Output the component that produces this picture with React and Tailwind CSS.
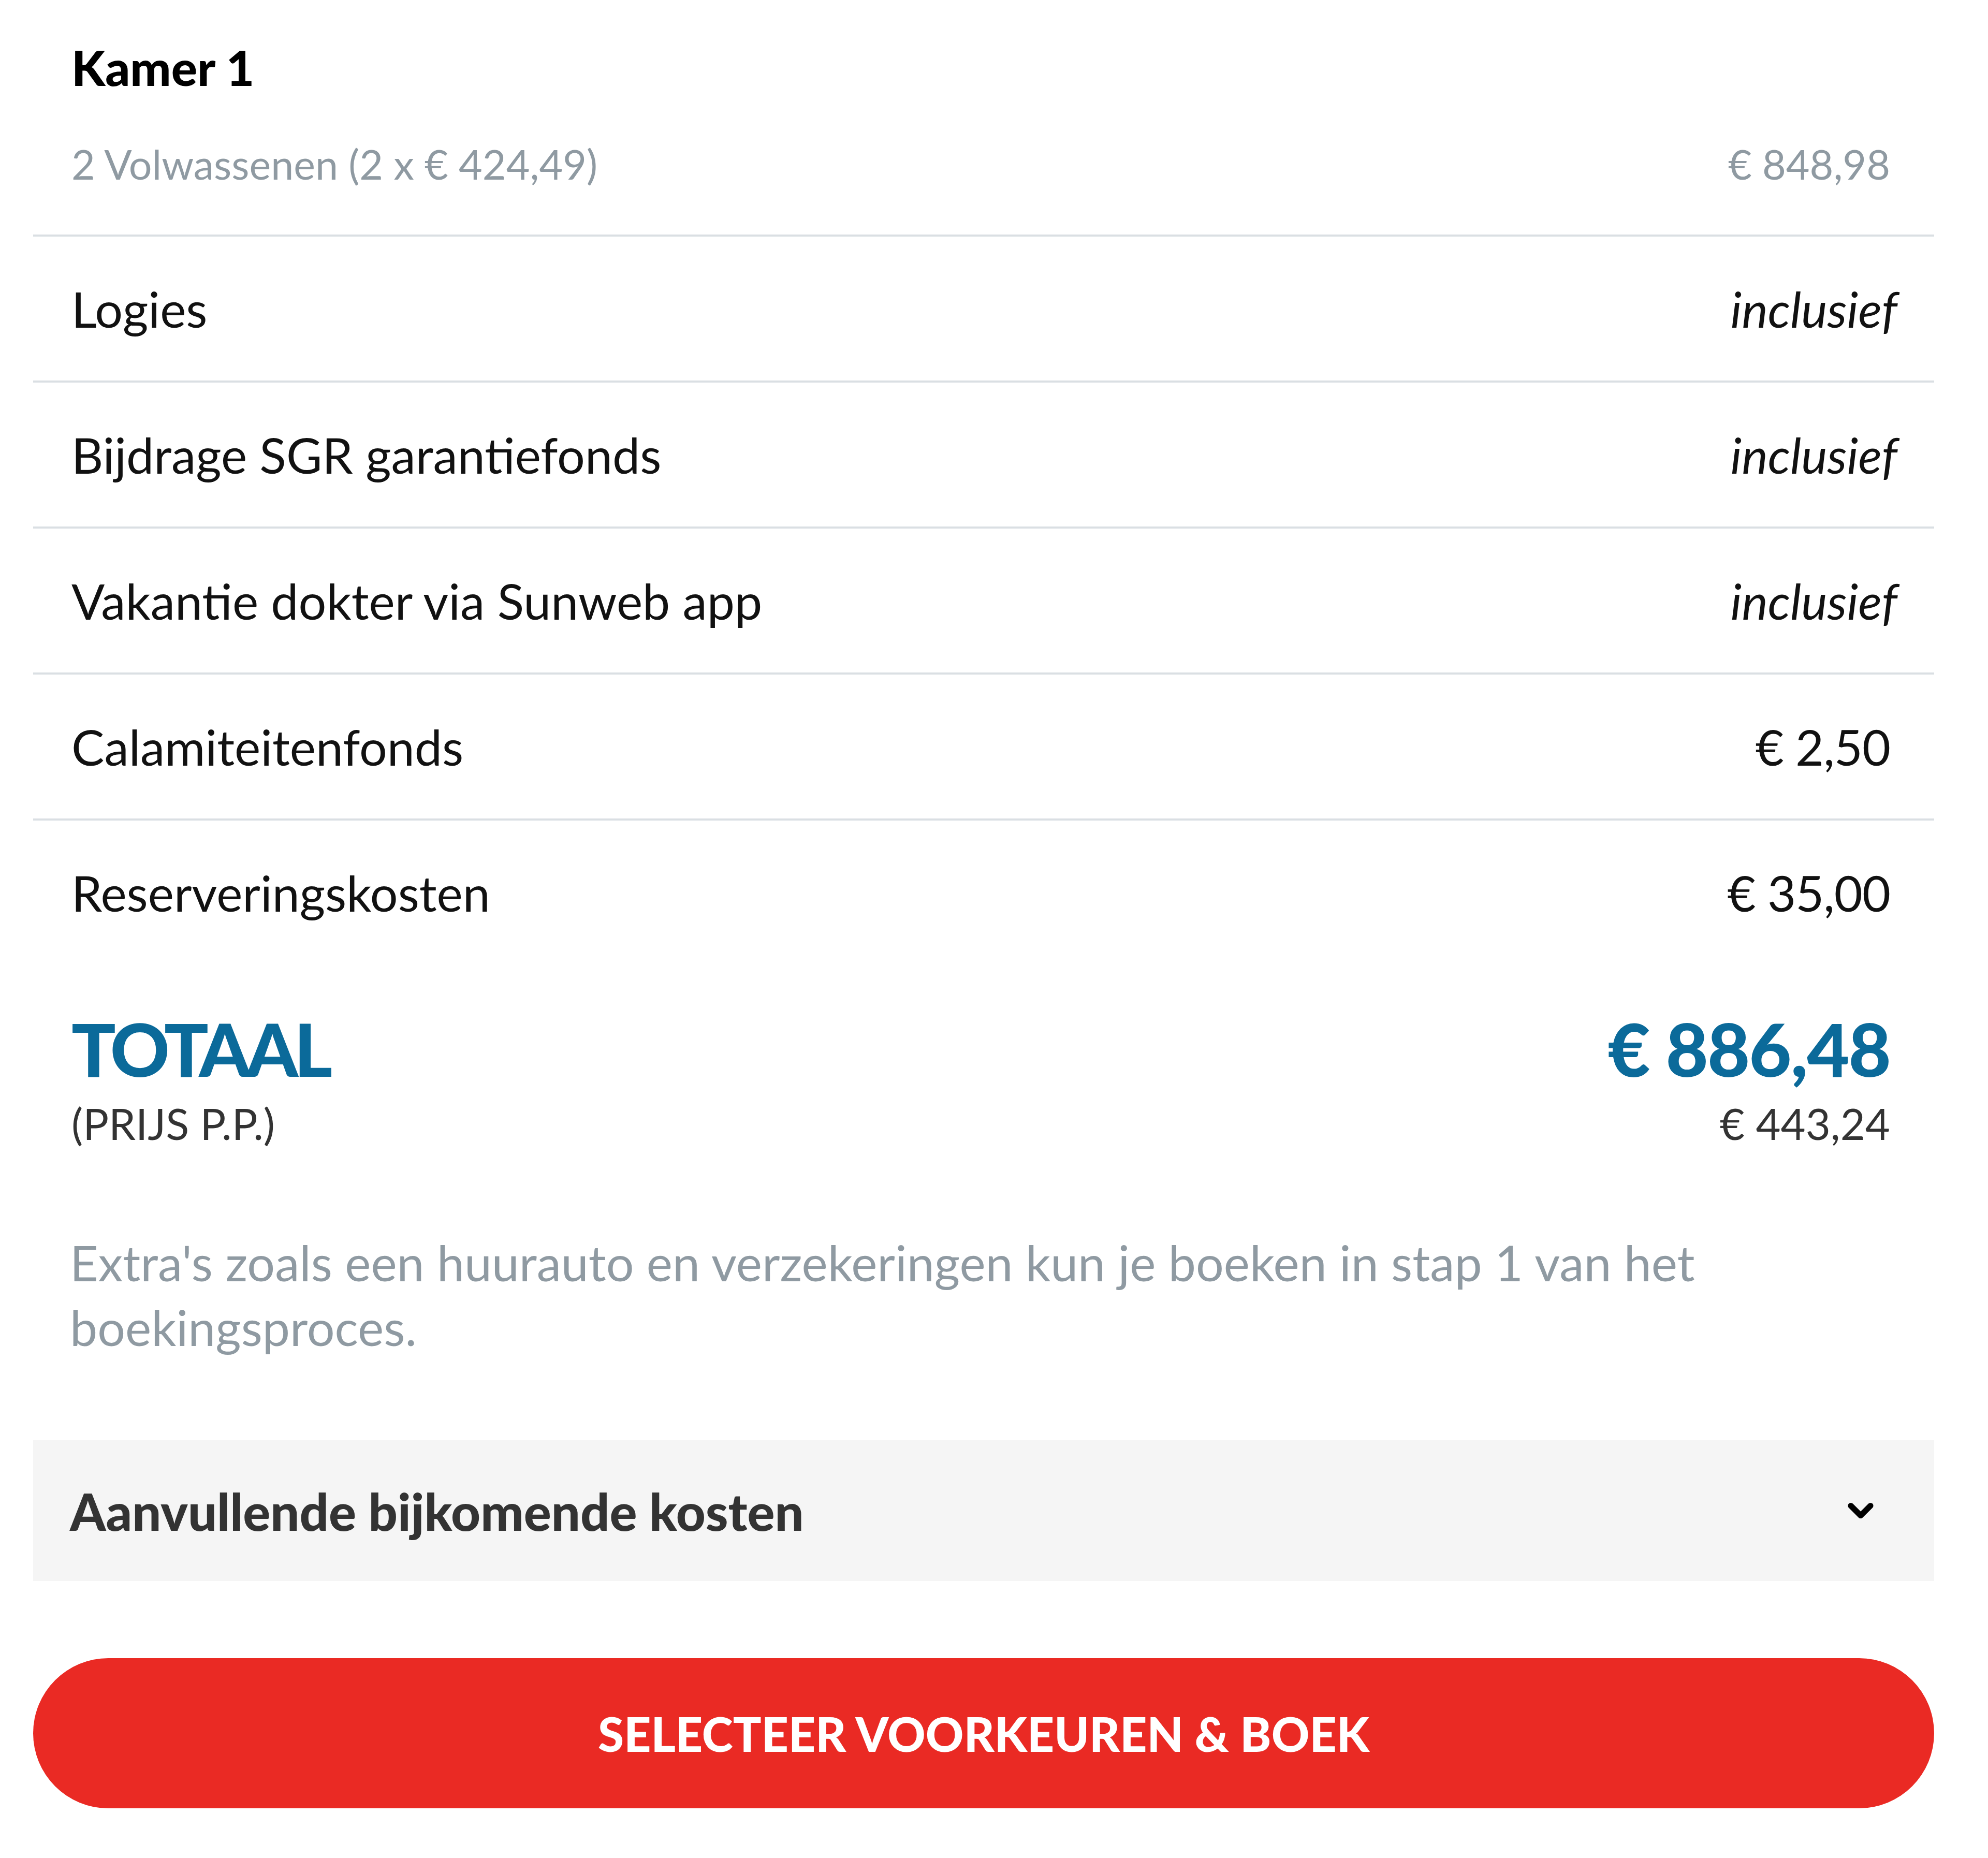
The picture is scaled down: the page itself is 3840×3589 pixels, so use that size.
import { ChevronDown } from 'lucide-react'

const rows = [
  { label: 'Logies', value: 'inclusief', italic: true },
  { label: 'Bijdrage SGR garantiefonds', value: 'inclusief', italic: true },
  { label: 'Vakantie dokter via Sunweb app', value: 'inclusief', italic: true },
  { label: 'Calamiteitenfonds', value: '€ 2,50' },
  { label: 'Reserveringskosten', value: '€ 35,00' },
]

const PriceRow = ({ label, value, italic }) => (
  <div className="flex h-[282px] items-center justify-between border-t-[4px] border-[#dadfe3] pl-[74px] pr-[85px]">
    <span className="text-[95px] leading-none text-[#111]">{label}</span>
    <span className={`text-[95px] leading-none text-[#111] ${italic ? 'italic -mr-[14px]' : 'tracking-[-1px]'}`}>{value}</span>
  </div>
)

const App = () => {
  return (
    <div className="min-h-screen w-full bg-white pl-[64px] pr-[104px] font-['Lato',sans-serif]">
      {/* Kamer */}
      <div className="pl-[74px] pr-[85px]">
        <div className="flex h-[260px] items-center">
          <h2 className="text-[94px] font-black leading-none text-black">Kamer 1</h2>
        </div>
        <div className="flex h-[112px] items-center justify-between text-[79px] leading-none text-[#8f9aa2]">
          <span>2 Volwassenen (2 x € 424,49)</span>
          <span>€ 848,98</span>
        </div>
        <div className="h-[81px]" />
      </div>

      {/* Rows */}
      {rows.map((row) => (
        <PriceRow key={row.label} {...row} />
      ))}

      {/* Totaal */}
      <div className="pl-[74px] pr-[85px] pt-[87px]">
        <div className="flex h-[150px] items-center justify-between text-[142px] font-black leading-none text-[#0b6a9a]">
          <span className="tracking-[-8px]">TOTAAL</span>
          <span className="tracking-[-2px]">€ 886,48</span>
        </div>
        <div className="mt-[20px] flex h-[100px] items-center justify-between text-[83px] leading-none text-[#333]">
          <span>(PRIJS P.P.)</span>
          <span>€ 443,24</span>
        </div>
      </div>

      {/* Info */}
      <p className="mt-[156px] pl-[71px] pr-[300px] text-[95px] leading-[125px] text-[#8f9aa2]">
        Extra's zoals een huurauto en verzekeringen kun je boeken in stap 1 van het boekingsproces.
      </p>

      {/* Aanvullende kosten */}
      <button className="mt-[156px] flex h-[272px] w-full items-center justify-between bg-[#f5f5f5] pl-[71px] pr-[104px]">
        <span className="text-[99px] font-black leading-none text-[#333]">Aanvullende bijkomende kosten</span>
        <ChevronDown className="h-[76px] w-[76px] text-black" strokeWidth={3.5} />
      </button>

      {/* CTA */}
      <div className="pb-[92px] pt-[149px]">
        <button className="flex h-[290px] w-full items-center justify-center rounded-full bg-[#ea2a24] text-[91px] font-black uppercase leading-none text-white">
          Selecteer voorkeuren &amp; boek
        </button>
      </div>
    </div>
  )
}

export default App
